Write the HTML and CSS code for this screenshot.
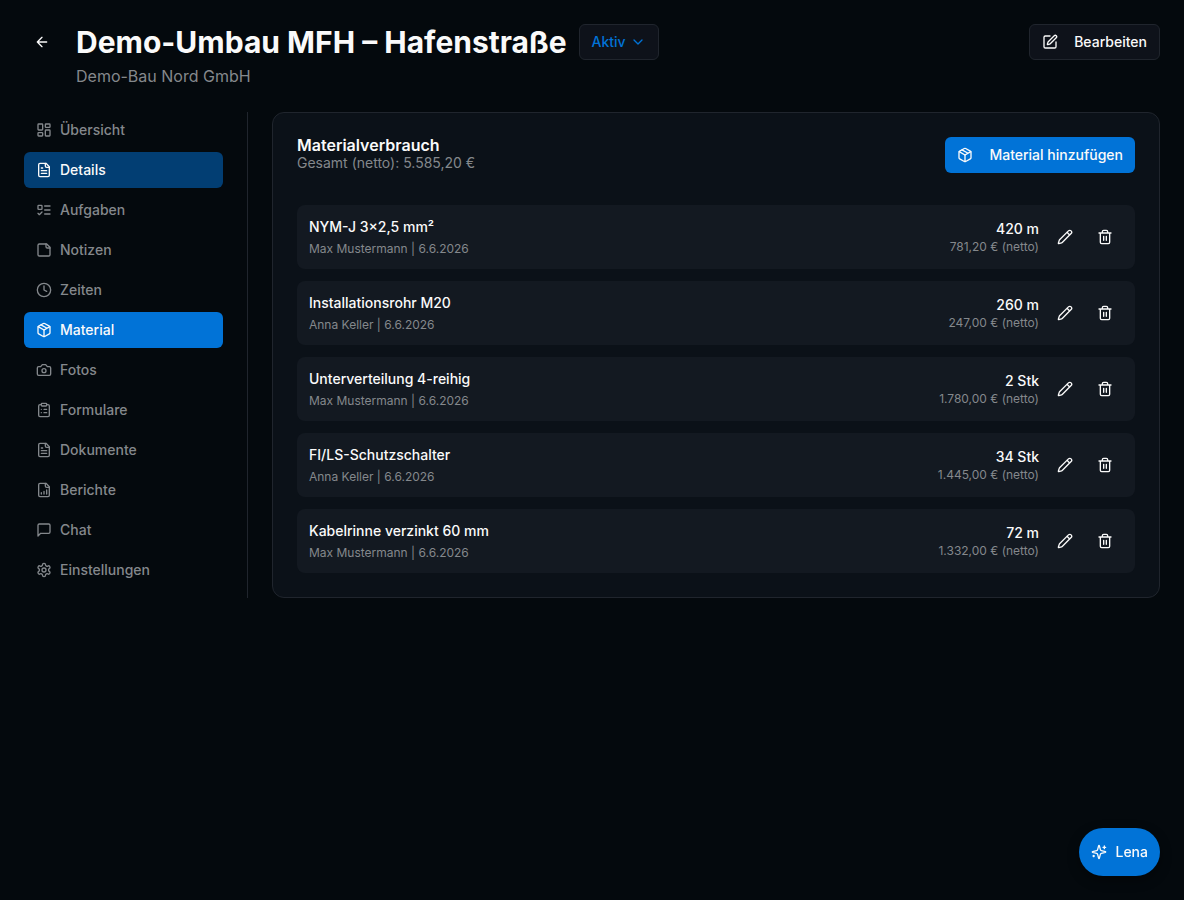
FILE: index.html
```html
<!DOCTYPE html>
<html lang="de">
<head>
<meta charset="utf-8">
<meta name="viewport" content="width=device-width, initial-scale=1">
<title>Demo-Umbau MFH – Hafenstraße</title>
<link rel="stylesheet" href="styles.css">
</head>
<body>
<svg class="sprite" aria-hidden="true">
  <symbol id="i-back" viewBox="0 0 24 24"><path d="m12 19-7-7 7-7M19 12H5"/></symbol>
  <symbol id="i-chevron" viewBox="0 0 24 24"><path d="m6 9 6 6 6-6"/></symbol>
  <symbol id="i-edit" viewBox="0 0 24 24"><path d="M12 3H5a2 2 0 0 0-2 2v14a2 2 0 0 0 2 2h14a2 2 0 0 0 2-2v-7"/><path d="M18.375 2.625a1 1 0 0 1 3 3l-9.013 9.014a2 2 0 0 1-.853.505l-2.873.84a.5.5 0 0 1-.62-.62l.84-2.873a2 2 0 0 1 .506-.852z"/></symbol>
  <symbol id="i-dashboard" viewBox="0 0 24 24"><rect width="7" height="9" x="3" y="3" rx="1"/><rect width="7" height="5" x="14" y="3" rx="1"/><rect width="7" height="9" x="14" y="12" rx="1"/><rect width="7" height="5" x="3" y="16" rx="1"/></symbol>
  <symbol id="i-file" viewBox="0 0 24 24"><path d="M15 2H6a2 2 0 0 0-2 2v16a2 2 0 0 0 2 2h12a2 2 0 0 0 2-2V7Z"/><path d="M14 2v4a2 2 0 0 0 2 2h4M10 9H8M16 13H8M16 17H8"/></symbol>
  <symbol id="i-todo" viewBox="0 0 24 24"><rect x="3" y="5" width="6" height="6" rx="1"/><path d="m3 17 2 2 4-4M13 6h8M13 12h8M13 18h8"/></symbol>
  <symbol id="i-note" viewBox="0 0 24 24"><path d="M16 3H5a2 2 0 0 0-2 2v14a2 2 0 0 0 2 2h14a2 2 0 0 0 2-2V8Z"/><path d="M15 3v4a2 2 0 0 0 2 2h4"/></symbol>
  <symbol id="i-clock" viewBox="0 0 24 24"><circle cx="12" cy="12" r="10"/><path d="M12 6v6l4 2"/></symbol>
  <symbol id="i-package" viewBox="0 0 24 24"><path d="M11 21.73a2 2 0 0 0 2 0l7-4A2 2 0 0 0 21 16V8a2 2 0 0 0-1-1.73l-7-4a2 2 0 0 0-2 0l-7 4A2 2 0 0 0 3 8v8a2 2 0 0 0 1 1.73zM12 22V12"/><path d="M3.29 7 12 12l8.71-5M7.5 4.27l9 5.15"/></symbol>
  <symbol id="i-camera" viewBox="0 0 24 24"><path d="M14.5 4h-5L7 7H4a2 2 0 0 0-2 2v9a2 2 0 0 0 2 2h16a2 2 0 0 0 2-2V9a2 2 0 0 0-2-2h-3z"/><circle cx="12" cy="13" r="3"/></symbol>
  <symbol id="i-clipboard" viewBox="0 0 24 24"><rect width="8" height="4" x="8" y="2" rx="1"/><path d="M16 4h2a2 2 0 0 1 2 2v14a2 2 0 0 1-2 2H6a2 2 0 0 1-2-2V6a2 2 0 0 1 2-2h2M12 11h4M12 16h4M8 11h.01M8 16h.01"/></symbol>
  <symbol id="i-report" viewBox="0 0 24 24"><path d="M15 2H6a2 2 0 0 0-2 2v16a2 2 0 0 0 2 2h12a2 2 0 0 0 2-2V7Z"/><path d="M14 2v4a2 2 0 0 0 2 2h4M8 18v-2M12 18v-4M16 18v-6"/></symbol>
  <symbol id="i-chat" viewBox="0 0 24 24"><path d="M21 15a2 2 0 0 1-2 2H7l-4 4V5a2 2 0 0 1 2-2h14a2 2 0 0 1 2 2z"/></symbol>
  <symbol id="i-settings" viewBox="0 0 24 24"><path d="M12.22 2h-.44a2 2 0 0 0-2 2v.18a2 2 0 0 1-1 1.73l-.43.25a2 2 0 0 1-2 0l-.15-.08a2 2 0 0 0-2.73.73l-.22.38a2 2 0 0 0 .73 2.73l.15.1a2 2 0 0 1 1 1.72v.51a2 2 0 0 1-1 1.74l-.15.09a2 2 0 0 0-.73 2.73l.22.38a2 2 0 0 0 2.73.73l.15-.08a2 2 0 0 1 2 0l.43.25a2 2 0 0 1 1 1.73V20a2 2 0 0 0 2 2h.44a2 2 0 0 0 2-2v-.18a2 2 0 0 1 1-1.73l.43-.25a2 2 0 0 1 2 0l.15.08a2 2 0 0 0 2.73-.73l.22-.39a2 2 0 0 0-.73-2.73l-.15-.08a2 2 0 0 1-1-1.74v-.5a2 2 0 0 1 1-1.74l.15-.09a2 2 0 0 0 .73-2.73l-.22-.38a2 2 0 0 0-2.73-.73l-.15.08a2 2 0 0 1-2 0l-.43-.25a2 2 0 0 1-1-1.73V4a2 2 0 0 0-2-2z"/><circle cx="12" cy="12" r="3"/></symbol>
  <symbol id="i-pencil" viewBox="0 0 24 24"><path d="M21.174 6.812a1 1 0 0 0-3.986-3.987L3.842 16.174a2 2 0 0 0-.5.83l-1.321 4.352a.5.5 0 0 0 .623.622l4.353-1.32a2 2 0 0 0 .83-.497zM15 5l4 4"/></symbol>
  <symbol id="i-trash" viewBox="0 0 24 24"><path d="M3 6h18M19 6v14c0 1-1 2-2 2H7c-1 0-2-1-2-2V6M8 6V4c0-1 1-2 2-2h4c1 0 2 1 2 2v2M10 11v6M14 11v6"/></symbol>
  <symbol id="i-sparkles" viewBox="0 0 24 24"><path d="M9.937 15.5A2 2 0 0 0 8.5 14.063l-6.135-1.582a.5.5 0 0 1 0-.962L8.5 9.936A2 2 0 0 0 9.937 8.5l1.582-6.135a.5.5 0 0 1 .963 0L14.063 8.5A2 2 0 0 0 15.5 9.937l6.135 1.581a.5.5 0 0 1 0 .964L15.5 14.063a2 2 0 0 0-1.437 1.437l-1.582 6.135a.5.5 0 0 1-.963 0zM20 3v4M22 5h-4M4 17v2M5 18H3"/></symbol>
</svg>

<div class="page">
  <header class="header">
    <button class="icon-button" type="button" aria-label="Zurück"><svg class="icon"><use href="#i-back"/></svg></button>
    <div class="heading">
      <div class="title-row">
        <h1 class="title">Demo-Umbau MFH – Hafenstraße</h1>
        <button class="button button-outline button-status" type="button">Aktiv<svg class="icon"><use href="#i-chevron"/></svg></button>
      </div>
      <p class="client">Demo-Bau Nord GmbH</p>
    </div>
    <button class="button button-outline" type="button"><svg class="icon"><use href="#i-edit"/></svg>Bearbeiten</button>
  </header>

  <div class="layout">
    <nav class="nav" aria-label="Projekt">
      <a class="nav-item" href="#"><svg class="icon"><use href="#i-dashboard"/></svg>Übersicht</a>
      <a class="nav-item nav-item-open" href="#"><svg class="icon"><use href="#i-file"/></svg>Details</a>
      <a class="nav-item" href="#"><svg class="icon"><use href="#i-todo"/></svg>Aufgaben</a>
      <a class="nav-item" href="#"><svg class="icon"><use href="#i-note"/></svg>Notizen</a>
      <a class="nav-item" href="#"><svg class="icon"><use href="#i-clock"/></svg>Zeiten</a>
      <a class="nav-item nav-item-active" href="#" aria-current="page"><svg class="icon"><use href="#i-package"/></svg>Material</a>
      <a class="nav-item" href="#"><svg class="icon"><use href="#i-camera"/></svg>Fotos</a>
      <a class="nav-item" href="#"><svg class="icon"><use href="#i-clipboard"/></svg>Formulare</a>
      <a class="nav-item" href="#"><svg class="icon"><use href="#i-file"/></svg>Dokumente</a>
      <a class="nav-item" href="#"><svg class="icon"><use href="#i-report"/></svg>Berichte</a>
      <a class="nav-item" href="#"><svg class="icon"><use href="#i-chat"/></svg>Chat</a>
      <a class="nav-item" href="#"><svg class="icon"><use href="#i-settings"/></svg>Einstellungen</a>
    </nav>

    <main class="card">
      <div class="card-header">
        <div>
          <h2 class="card-title">Materialverbrauch</h2>
          <p class="card-total">Gesamt (netto): 5.585,20 €</p>
        </div>
        <button class="button button-primary" type="button"><svg class="icon"><use href="#i-package"/></svg>Material hinzufügen</button>
      </div>
      <ul class="list">
        <li class="row">
          <div class="item"><p class="item-name">NYM-J 3×2,5 mm²</p><p class="item-meta">Max Mustermann | 6.6.2026</p></div>
          <div class="amount"><p class="amount-value">420 m</p><p class="item-price">781,20 € (netto)</p></div>
          <div class="actions">
            <button class="icon-button" type="button" aria-label="Bearbeiten"><svg class="icon"><use href="#i-pencil"/></svg></button>
            <button class="icon-button" type="button" aria-label="Löschen"><svg class="icon"><use href="#i-trash"/></svg></button>
          </div>
        </li>
        <li class="row">
          <div class="item"><p class="item-name">Installationsrohr M20</p><p class="item-meta">Anna Keller | 6.6.2026</p></div>
          <div class="amount"><p class="amount-value">260 m</p><p class="item-price">247,00 € (netto)</p></div>
          <div class="actions">
            <button class="icon-button" type="button" aria-label="Bearbeiten"><svg class="icon"><use href="#i-pencil"/></svg></button>
            <button class="icon-button" type="button" aria-label="Löschen"><svg class="icon"><use href="#i-trash"/></svg></button>
          </div>
        </li>
        <li class="row">
          <div class="item"><p class="item-name">Unterverteilung 4-reihig</p><p class="item-meta">Max Mustermann | 6.6.2026</p></div>
          <div class="amount"><p class="amount-value">2 Stk</p><p class="item-price">1.780,00 € (netto)</p></div>
          <div class="actions">
            <button class="icon-button" type="button" aria-label="Bearbeiten"><svg class="icon"><use href="#i-pencil"/></svg></button>
            <button class="icon-button" type="button" aria-label="Löschen"><svg class="icon"><use href="#i-trash"/></svg></button>
          </div>
        </li>
        <li class="row">
          <div class="item"><p class="item-name">FI/LS-Schutzschalter</p><p class="item-meta">Anna Keller | 6.6.2026</p></div>
          <div class="amount"><p class="amount-value">34 Stk</p><p class="item-price">1.445,00 € (netto)</p></div>
          <div class="actions">
            <button class="icon-button" type="button" aria-label="Bearbeiten"><svg class="icon"><use href="#i-pencil"/></svg></button>
            <button class="icon-button" type="button" aria-label="Löschen"><svg class="icon"><use href="#i-trash"/></svg></button>
          </div>
        </li>
        <li class="row">
          <div class="item"><p class="item-name">Kabelrinne verzinkt 60 mm</p><p class="item-meta">Max Mustermann | 6.6.2026</p></div>
          <div class="amount"><p class="amount-value">72 m</p><p class="item-price">1.332,00 € (netto)</p></div>
          <div class="actions">
            <button class="icon-button" type="button" aria-label="Bearbeiten"><svg class="icon"><use href="#i-pencil"/></svg></button>
            <button class="icon-button" type="button" aria-label="Löschen"><svg class="icon"><use href="#i-trash"/></svg></button>
          </div>
        </li>
      </ul>
    </main>
  </div>
</div>

<button class="assistant" type="button"><svg class="icon"><use href="#i-sparkles"/></svg>Lena</button>
</body>
</html>
```

FILE: styles.css
```css
:root {
  --bg: #04090d;
  --card: #0b1118;
  --row: #131921;
  --control: #0e121a;
  --border: #20252d;
  --text: #fafafa;
  --muted: #84888c;
  --primary: #0173d7;
  --primary-dim: #023e73;
}

* {
  box-sizing: border-box;
  margin: 0;
  padding: 0;
}

body {
  min-height: 100vh;
  background: var(--bg);
  color: var(--text);
  font: 14px/20px Inter, "Liberation Sans", sans-serif;
}

button {
  border: 0;
  background: none;
  color: inherit;
  font: inherit;
  cursor: pointer;
}

.sprite {
  display: none;
}

.icon {
  width: 16px;
  height: 16px;
  flex: none;
  fill: none;
  stroke: currentColor;
  stroke-width: 2;
  stroke-linecap: round;
  stroke-linejoin: round;
}

.page {
  display: flex;
  flex-direction: column;
  gap: 24px;
  padding: 24px;
}

.header {
  display: flex;
  align-items: flex-start;
  gap: 16px;
}

.heading {
  flex: 1;
  display: flex;
  flex-direction: column;
  gap: 4px;
}

.title-row {
  display: flex;
  align-items: center;
  gap: 12px;
}

.title {
  font-size: 30px;
  line-height: 36px;
  font-weight: 700;
}

.client {
  color: var(--muted);
  font-size: 16px;
  line-height: 24px;
}

.icon-button {
  display: flex;
  align-items: center;
  justify-content: center;
  width: 36px;
  height: 36px;
  border-radius: 6px;
}

.button {
  display: flex;
  align-items: center;
  gap: 16px;
  height: 36px;
  padding: 0 12px;
  border-radius: 6px;
  font-weight: 500;
  white-space: nowrap;
}

.button-outline {
  border: 1px solid var(--border);
  background: var(--control);
}

.button-status {
  gap: 4px;
  color: var(--primary);
}

.button-primary {
  background: var(--primary);
}

.layout {
  display: flex;
  gap: 24px;
}

.nav {
  flex: none;
  display: flex;
  flex-direction: column;
  gap: 4px;
  width: 224px;
  padding-right: 24px;
  border-right: 1px solid var(--border);
}

.nav-item {
  display: flex;
  align-items: center;
  gap: 8px;
  height: 36px;
  padding: 0 12px;
  border-radius: 6px;
  color: var(--muted);
  font-weight: 500;
  text-decoration: none;
}

.nav-item-open {
  background: var(--primary-dim);
  color: var(--text);
}

.nav-item-active {
  background: var(--primary);
  color: var(--text);
}

.card {
  flex: 1;
  display: flex;
  flex-direction: column;
  gap: 32px;
  padding: 24px;
  border: 1px solid var(--border);
  border-radius: 12px;
  background: var(--card);
}

.card-header {
  display: flex;
  align-items: center;
  justify-content: space-between;
}

.card-title {
  font-size: 16px;
  line-height: 16px;
  font-weight: 600;
}

.card-total {
  color: var(--muted);
}

.list {
  display: flex;
  flex-direction: column;
  gap: 12px;
  list-style: none;
}

.row {
  display: flex;
  align-items: center;
  gap: 8px;
  padding: 12px;
  border-radius: 8px;
  background: var(--row);
}

.item {
  flex: 1;
  display: flex;
  flex-direction: column;
  gap: 4px;
}

.item-name,
.amount-value {
  font-weight: 500;
}

.item-meta,
.item-price {
  color: var(--muted);
  font-size: 12px;
  line-height: 16px;
}

.amount {
  text-align: right;
}

.actions {
  display: flex;
  gap: 4px;
}

.assistant {
  position: fixed;
  right: 24px;
  bottom: 24px;
  display: flex;
  align-items: center;
  gap: 8px;
  height: 48px;
  padding: 0 12px;
  border-radius: 24px;
  background: var(--primary);
  box-shadow: 0 4px 12px rgba(0, 0, 0, 0.4);
  font-weight: 500;
}
```
